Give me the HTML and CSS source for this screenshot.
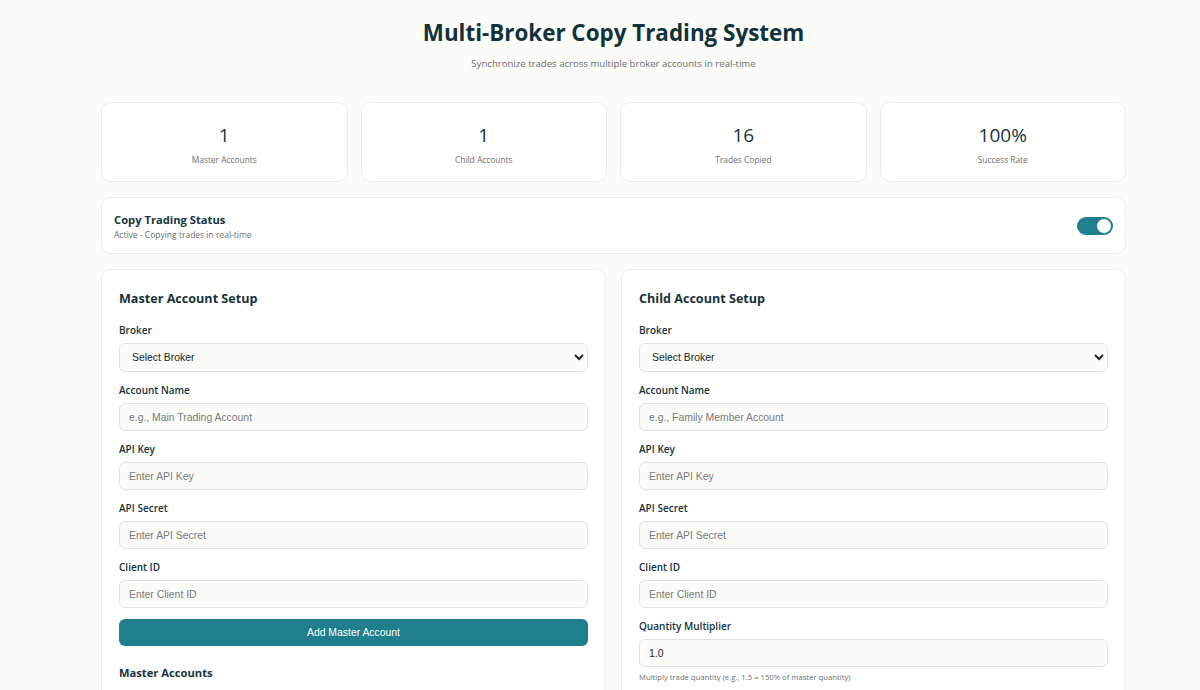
FILE: index.html
```html
<!DOCTYPE html>
<html lang="en">
<head>
<meta charset="utf-8">
<title>Multi-Broker Copy Trading System</title>
<link rel="stylesheet" href="styles.css">
</head>
<body>
<div class="container">
  <header class="header">
    <h1 class="title">Multi-Broker Copy Trading System</h1>
    <p class="subtitle">Synchronize trades across multiple broker accounts in real-time</p>
  </header>

  <section class="stats">
    <div class="stat-card"><div class="stat-value">1</div><div class="stat-label">Master Accounts</div></div>
    <div class="stat-card"><div class="stat-value">1</div><div class="stat-label">Child Accounts</div></div>
    <div class="stat-card"><div class="stat-value">16</div><div class="stat-label">Trades Copied</div></div>
    <div class="stat-card"><div class="stat-value">100%</div><div class="stat-label">Success Rate</div></div>
  </section>

  <section class="status-card">
    <div class="status-text">
      <div class="status-title">Copy Trading Status</div>
      <div class="status-sub">Active - Copying trades in real-time</div>
    </div>
    <div class="toggle"><div class="knob"></div></div>
  </section>

  <section class="panels">
    <div class="panel">
      <h2 class="panel-title">Master Account Setup</h2>
      <div class="field">
        <label class="label">Broker</label>
        <select class="select"><option>Select Broker</option></select>
      </div>
      <div class="field">
        <label class="label">Account Name</label>
        <input class="input" placeholder="e.g., Main Trading Account">
      </div>
      <div class="field">
        <label class="label">API Key</label>
        <input class="input" placeholder="Enter API Key">
      </div>
      <div class="field">
        <label class="label">API Secret</label>
        <input class="input" placeholder="Enter API Secret">
      </div>
      <div class="field">
        <label class="label">Client ID</label>
        <input class="input" placeholder="Enter Client ID">
      </div>
      <button class="btn">Add Master Account</button>
      <h3 class="list-title">Master Accounts</h3>
    </div>

    <div class="panel">
      <h2 class="panel-title">Child Account Setup</h2>
      <div class="field">
        <label class="label">Broker</label>
        <select class="select"><option>Select Broker</option></select>
      </div>
      <div class="field">
        <label class="label">Account Name</label>
        <input class="input" placeholder="e.g., Family Member Account">
      </div>
      <div class="field">
        <label class="label">API Key</label>
        <input class="input" placeholder="Enter API Key">
      </div>
      <div class="field">
        <label class="label">API Secret</label>
        <input class="input" placeholder="Enter API Secret">
      </div>
      <div class="field">
        <label class="label">Client ID</label>
        <input class="input" placeholder="Enter Client ID">
      </div>
      <div class="field">
        <label class="label">Quantity Multiplier</label>
        <input class="input" value="1.0">
        <div class="help">Multiply trade quantity (e.g., 1.5 = 150% of master quantity)</div>
      </div>
    </div>
  </section>
</div>
</body>
</html>
```

FILE: styles.css
```css
* { box-sizing: border-box; }

body {
  margin: 0;
  background: #fbfbf8;
  font-family: "Open Sans", "Noto Sans", sans-serif;
  color: #15333b;
}

.container {
  width: 1025px;
  margin-left: 101px;
}

.header {
  text-align: center;
  padding-top: 17px;
}

.title {
  margin: 0;
  font-size: 22.4px;
  font-weight: 700;
  line-height: 32px;
  color: #11323b;
}

.subtitle {
  margin: 8px 0 0;
  font-size: 9.6px;
  line-height: 14px;
  color: #6b6f70;
}

.stats {
  display: grid;
  grid-template-columns: repeat(4, 1fr);
  gap: 13px;
  margin-top: 31px;
}

.stat-card {
  background: #fff;
  border: 1px solid #ecece8;
  border-radius: 10px;
  height: 80px;
  text-align: center;
  padding-top: 18px;
}

.stat-value {
  font-size: 19px;
  font-weight: 500;
  line-height: 28px;
  color: #15333b;
}

.stat-label {
  margin-top: 5px;
  font-size: 8.4px;
  line-height: 12px;
  color: #6b6f70;
}

.status-card {
  margin-top: 15px;
  background: #fff;
  border: 1px solid #ecece8;
  border-radius: 10px;
  height: 57px;
  padding: 2px 12px 0;
  display: flex;
  align-items: center;
  justify-content: space-between;
}

.status-title {
  font-size: 11.2px;
  font-weight: 700;
  line-height: 16px;
}

.status-sub {
  font-size: 8.5px;
  line-height: 12px;
  color: #6b6f70;
  margin-top: 1px;
}

.toggle {
  width: 36px;
  height: 18px;
  border-radius: 9px;
  background: #1f7f8c;
  display: flex;
  align-items: center;
  justify-content: flex-end;
  padding: 0 2px;
  margin-bottom: 2px;
}

.knob {
  width: 14px;
  height: 14px;
  border-radius: 50%;
  background: #fff;
}

.panels {
  margin-top: 15px;
  display: grid;
  grid-template-columns: 1fr 1fr;
  gap: 15px;
}

.panel {
  background: #fff;
  border: 1px solid #ecece8;
  border-radius: 10px;
  padding: 19px 17px 20px;
  min-height: 440px;
}

.panel-title {
  margin: 0 0 14px;
  font-size: 12.6px;
  font-weight: 700;
  line-height: 20px;
}

.field {
  margin-bottom: 11px;
}

.label {
  display: block;
  font-size: 10px;
  font-weight: 600;
  line-height: 14px;
  margin-bottom: 6px;
  color: #15333b;
}

.input, .select {
  display: block;
  width: 100%;
  height: 28px;
  border: 1px solid #e3e3de;
  border-radius: 6px;
  background: #fbfbf8;
  font-family: "Liberation Sans", Arial, sans-serif;
  font-size: 10.4px;
  color: #222;
  padding: 0 9px;
  outline: none;
}

.select {
  height: 29px;
  padding: 0 7px 0 8px;
}

.input::placeholder {
  color: #7a7a7a;
}

.btn {
  display: block;
  width: 100%;
  height: 27px;
  margin-top: 0;
  border: none;
  border-radius: 6px;
  background: #1f7f8c;
  color: #fff;
  font-family: "Liberation Sans", Arial, sans-serif;
  font-size: 10.4px;
}

.list-title {
  margin: 19px 0 0;
  font-size: 11.2px;
  font-weight: 700;
  line-height: 16px;
}

.help {
  margin-top: 5px;
  font-size: 7.7px;
  line-height: 11px;
  color: #6b6f70;
}
```
